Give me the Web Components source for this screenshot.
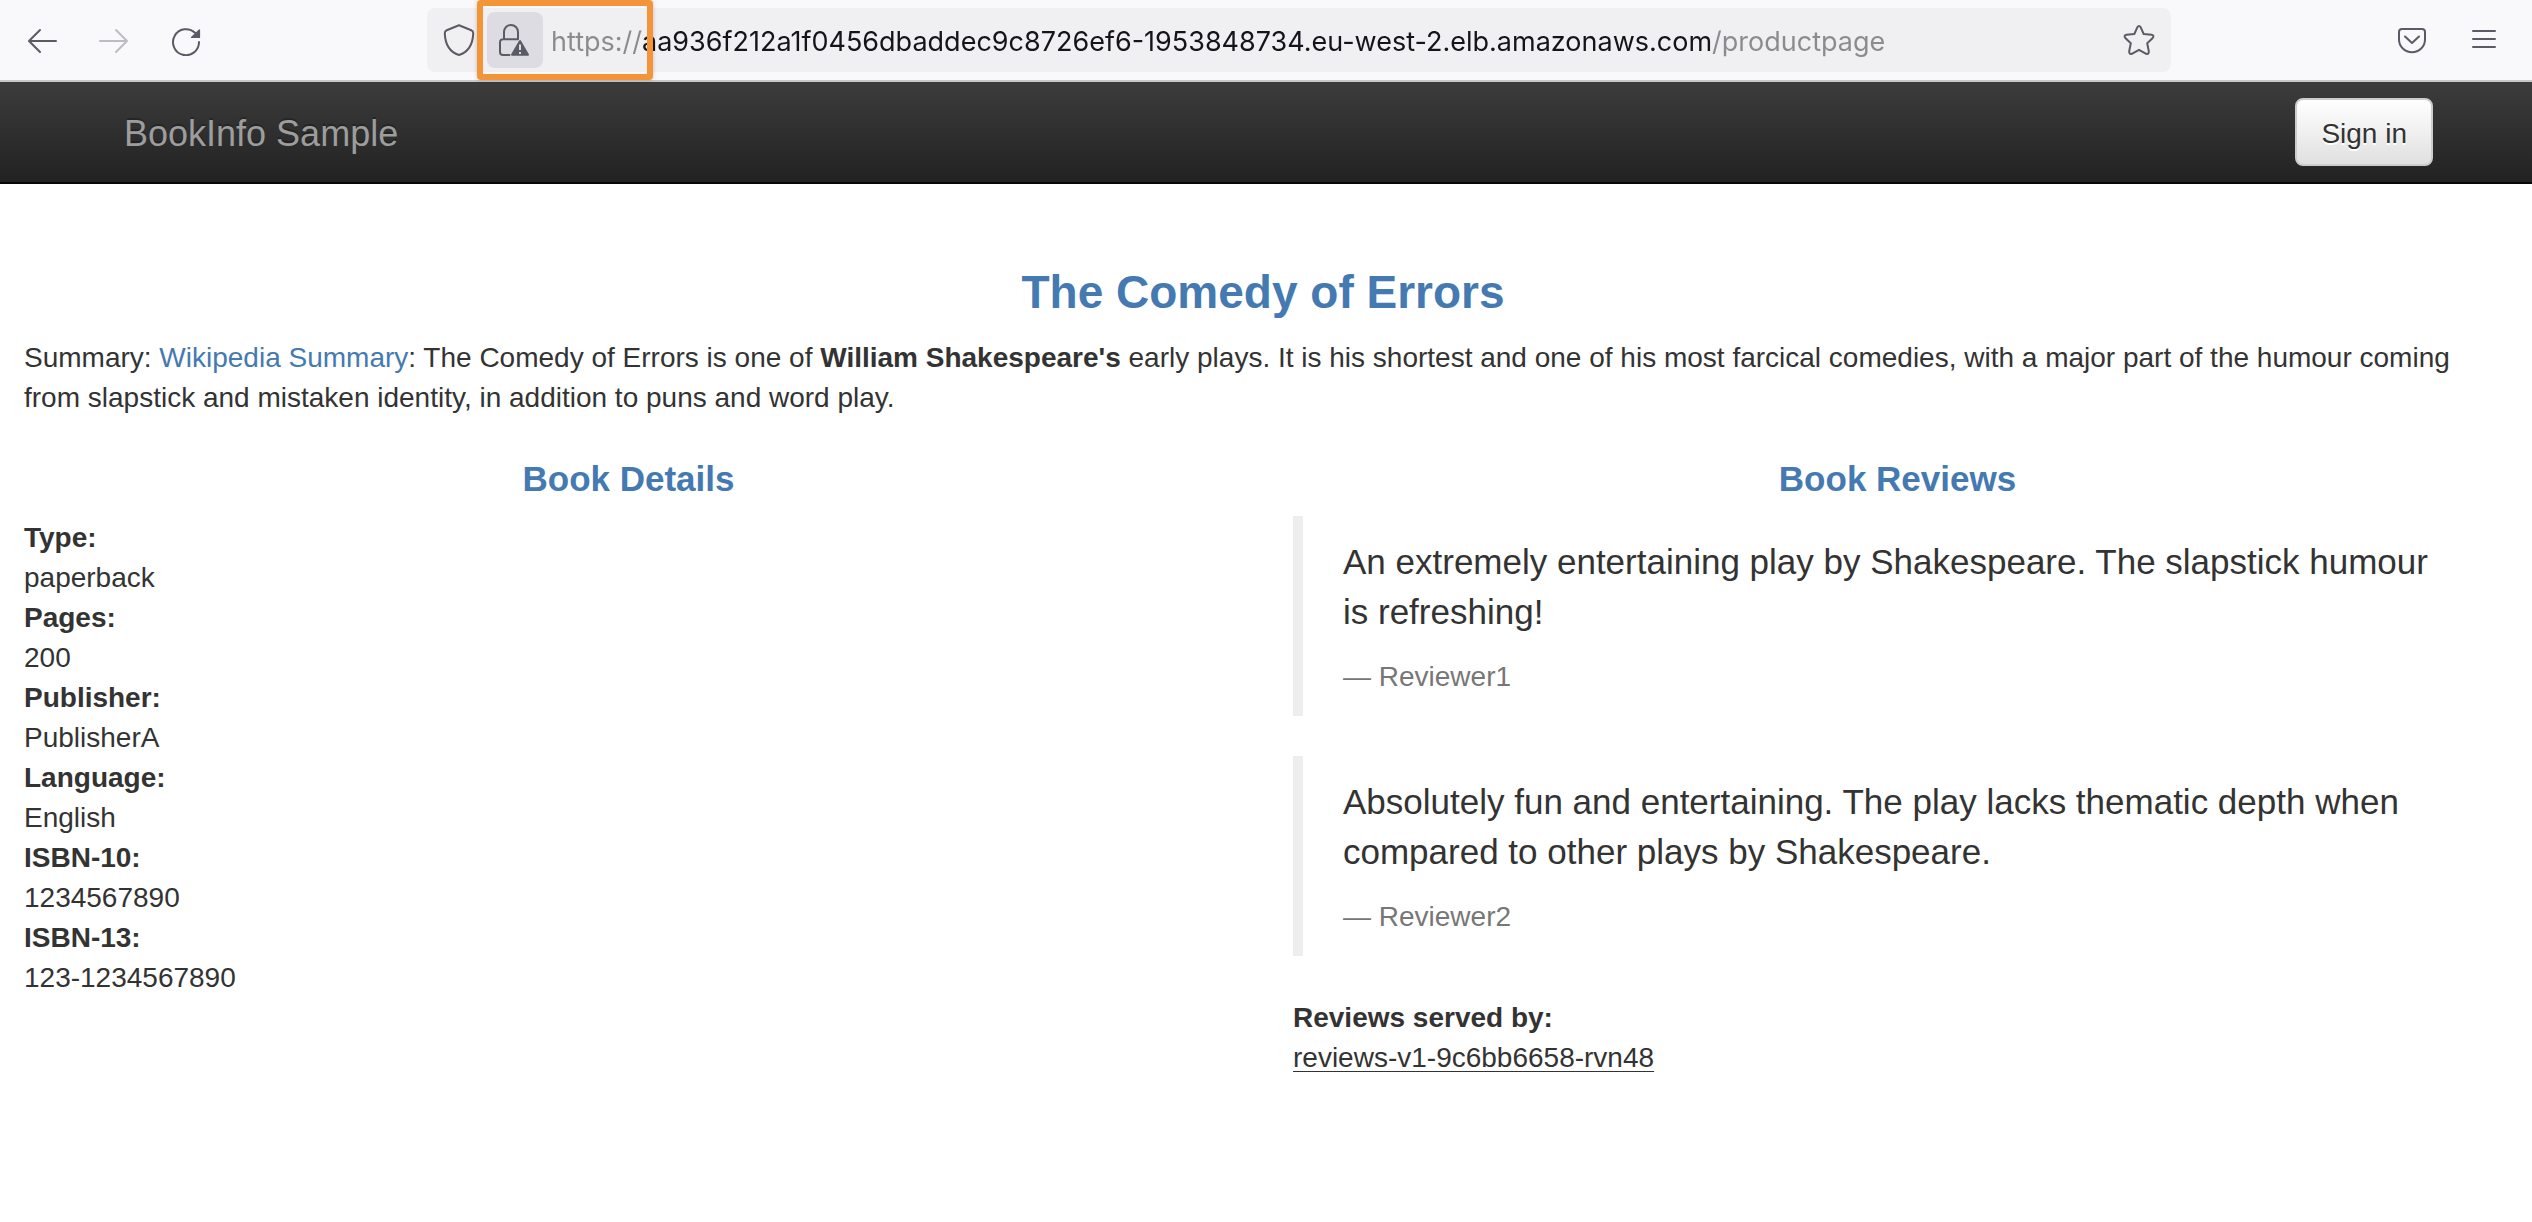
<!DOCTYPE html>
<html lang="en">
<head>
<meta charset="utf-8">
<title>Simple Bookstore App</title>
<style>
  html, body { margin: 0; background: #fff; }
  body { font: 28px/40px "Helvetica Neue", "Liberation Sans", Arial, sans-serif; color: #333; }
</style>
</head>
<body>
<browser-toolbar></browser-toolbar>
<site-navbar brand="BookInfo Sample"></site-navbar>
<product-page></product-page>

<script>
const define = (name, html, setup) => {
  const template = document.createElement('template');
  template.innerHTML = html;
  customElements.define(name, class extends HTMLElement {
    constructor() {
      super();
      this.attachShadow({ mode: 'open' }).append(template.content.cloneNode(true));
    }
    connectedCallback() { if (setup) setup(this, this.shadowRoot); }
  });
};

const icons = {
  back: '<path d="M30 17H3M14 6 3 17l11 11"/>',
  forward: '<path d="M2 17h27M18 6l11 11-11 11"/>',
  reload: '<path d="M29 18A13 13 0 1 1 25 8.8"/><path d="M21.5 13.4H29.4V6Z" fill="currentColor" stroke-width="1.4"/>',
  shield: '<path d="M16 1.2 28.3 6.2Q30.3 7 30.2 9.6C29.8 19.5 26 27.8 16 31 6 27.8 2.2 19.5 1.8 9.6Q1.7 7 3.7 6.2Z"/>',
  lock: '<path d="M5 15.2V8a7 7 0 0 1 14 0V15.2M10.500 31H4a3 3 0 0 1-3-3V18.2a3 3 0 0 1 3-3H19"/><path d="M21 17 13 30.700H29Z" fill="currentColor"/><path d="M21 20.500v5.500M21 28v2" stroke="#dddce2" stroke-linecap="butt"/>',
  star: '<path d="M14.300 3.300Q16 .6 17.700 3.300L20.700 10 28.600 10.800Q31.600 11.500 29.700 14L24.200 19.200 25.800 27.300Q26 30.600 23.200 29.800L16 25.800 8.800 29.800Q6 30.600 6.200 27.300L7.800 19.200 2.300 14Q.4 11.500 3.400 10.800L11.300 10Z"/>',
  pocket: '<path d="M6 5H26a3 3 0 0 1 3 3v7.500a13 12.800 0 0 1-26 0V8a3 3 0 0 1 3-3Z"/><path d="m9 12.500 7 6.500 7-6.500"/>',
  menu: '<path d="M5 7h22M5 15h22M5 23h22"/>'
};

define('tool-icon', `
  <style>
    :host { display: block; width: 32px; height: 32px; }
    svg { display: block; width: 100%; height: 100%; fill: none; stroke: currentColor;
          stroke-width: 2; stroke-linecap: round; stroke-linejoin: round; }
  </style>
  <svg viewBox="0 0 32 32" aria-hidden="true"></svg>`,
  (host, root) => { root.querySelector('svg').innerHTML = icons[host.getAttribute('name')]; });

define('tool-button', `
  <style>
    :host { display: block; flex: none; width: 72px; height: 56px; color: #5b5b66; }
    :host([compact]) { width: 56px; }
    :host([wide]) { width: 64px; }
    button { display: flex; align-items: center; justify-content: center; width: 100%; height: 100%;
             padding: 0; border: 0; border-radius: 8px; background: none; color: inherit; }
    :host([pressed]) button { background: #dddce2; }
    button:disabled { color: #bcbcc2; }
  </style>
  <button type="button"><slot></slot></button>`,
  (host, root) => {
    const button = root.querySelector('button');
    button.setAttribute('aria-label', host.getAttribute('label'));
    button.disabled = host.hasAttribute('disabled');
  });

define('address-bar', `
  <style>
    :host { display: flex; align-items: center; position: relative; box-sizing: border-box; min-width: 0;
            height: 64px; padding-left: 4px; border-radius: 8px; background: #f0f0f3; }
    input { flex: 1; box-sizing: border-box; min-width: 0; height: 56px; margin: 0; padding: 2px 0 0 8px;
            border: 0; outline: 0; font: 27px/40px Inter, sans-serif; color: transparent;
            background: linear-gradient(90deg, #8b8b8e 98px, #15141a 98px 1169px, #8b8b8e 1169px);
            -webkit-background-clip: text; background-clip: text; }
    .highlight { position: absolute; left: 50px; top: -8px; box-sizing: border-box; width: 176px; height: 80px;
                 border: 6px solid #f29437; border-radius: 4px; box-shadow: 0 0 4px #0003; pointer-events: none; }
  </style>
  <tool-button label="Tracking protection" compact><tool-icon name="shield"></tool-icon></tool-button>
  <tool-button label="Site information" compact pressed><tool-icon name="lock"></tool-icon></tool-button>
  <input type="text" aria-label="Address" spellcheck="false"
         value="https://aa936f212a1f0456dbaddec9c8726ef6-1953848734.eu-west-2.elb.amazonaws.com/productpage">
  <tool-button label="Bookmark this page" wide><tool-icon name="star"></tool-icon></tool-button>
  <div class="highlight"></div>`);

define('browser-toolbar', `
  <style>
    :host { display: grid; grid-template-columns: 427fr 1744fr 361fr; align-items: center;
            height: 80px; background: #f9f9fb; border-bottom: 2px solid #c8c8ca; }
    .start, .end { display: flex; align-items: center; }
    .start { padding-left: 6px; }
    .end { justify-content: flex-end; padding-right: 12px; }
  </style>
  <div class="start">
    <tool-button label="Back"><tool-icon name="back"></tool-icon></tool-button>
    <tool-button label="Forward" disabled><tool-icon name="forward"></tool-icon></tool-button>
    <tool-button label="Reload"><tool-icon name="reload"></tool-icon></tool-button>
  </div>
  <address-bar></address-bar>
  <div class="end">
    <tool-button label="Save to Pocket"><tool-icon name="pocket"></tool-icon></tool-button>
    <tool-button label="Menu"><tool-icon name="menu"></tool-icon></tool-button>
  </div>`);

define('site-navbar', `
  <style>
    :host { display: flex; align-items: center; justify-content: space-between; height: 100px;
            padding: 0 99px 0 124px; border-bottom: 2px solid #080808;
            background: linear-gradient(#3c3c3c, #222); }
    a { padding-top: 3px; font-size: 36px; color: #9d9d9d; text-decoration: none; text-shadow: 0 -2px 0 #00000040; }
    button { box-sizing: border-box; height: 68px; padding: 3px 24px 0; border: 2px solid #ccc; border-radius: 8px;
             background: linear-gradient(#fff, #e0e0e0); font: inherit; color: #333;
             text-shadow: 0 2px 0 #fff; }
  </style>
  <a href="#"></a>
  <button type="button">Sign in</button>`,
  (host, root) => { root.querySelector('a').textContent = host.getAttribute('brand'); });

define('section-heading', `
  <style>
    :host { display: block; text-align: center; color: #447ab1; }
    h3, h4 { margin: 0; font-weight: bold; }
    h3 { padding: 20px 0; font-size: 46px; line-height: 52px; }
    h4 { padding: 21px 0 17px; font-size: 35px; line-height: 40px; }
  </style>`,
  (host, root) => {
    const heading = document.createElement(host.getAttribute('level') === '3' ? 'h3' : 'h4');
    heading.append(document.createElement('slot'));
    root.append(heading);
  });

define('detail-item', `
  <style>
    :host { display: block; }
    dl, dd { margin: 0; }
    dt { font-weight: bold; }
  </style>
  <dl><dt></dt><dd><slot></slot></dd></dl>`,
  (host, root) => { root.querySelector('dt').textContent = host.getAttribute('term'); });

define('book-review', `
  <style>
    :host { display: block; margin-bottom: 40px; }
    blockquote { margin: 0; padding: 21px 40px 19px; border-left: 10px solid #eee; font-size: 35px; line-height: 50px; }
    p { margin: 0 0 20px; }
    footer { font-size: 28px; line-height: 40px; color: #777; }
  </style>
  <blockquote>
    <p><slot></slot></p>
    <footer></footer>
  </blockquote>`,
  (host, root) => { root.querySelector('footer').textContent = '\u2014 ' + host.getAttribute('author'); });

define('product-page', `
  <style>
    :host { display: block; padding: 62px 30px 40px 24px; }
    p { margin: 0 0 20px; }
    a { color: #447ab1; text-decoration: none; }
    .columns { display: grid; grid-template-columns: 1fr 1fr; gap: 60px; }
    .details { padding-top: 2px; }
    u { text-decoration-thickness: 1px; text-underline-offset: 4px; text-decoration-skip-ink: none; }
  </style>
  <section-heading level="3">The Comedy of Errors</section-heading>
  <p>Summary: <a href="#">Wikipedia Summary</a>: The Comedy of Errors is one of <b>William Shakespeare's</b> early plays. It is his shortest and one of his most farcical comedies, with a major part of the humour coming from slapstick and mistaken identity, in addition to puns and word play.</p>
  <div class="columns">
    <section>
      <section-heading level="4">Book Details</section-heading>
      <div class="details">
        <detail-item term="Type:">paperback</detail-item>
        <detail-item term="Pages:">200</detail-item>
        <detail-item term="Publisher:">PublisherA</detail-item>
        <detail-item term="Language:">English</detail-item>
        <detail-item term="ISBN-10:">1234567890</detail-item>
        <detail-item term="ISBN-13:">123-1234567890</detail-item>
      </div>
    </section>
    <section>
      <section-heading level="4">Book Reviews</section-heading>
      <book-review author="Reviewer1">An extremely entertaining play by Shakespeare. The slapstick humour is refreshing!</book-review>
      <book-review author="Reviewer2">Absolutely fun and entertaining. The play lacks thematic depth when compared to other plays by Shakespeare.</book-review>
      <div class="details">
        <detail-item term="Reviews served by:"><u>reviews-v1-9c6bb6658-rvn48</u></detail-item>
      </div>
    </section>
  </div>`);
</script>
</body>
</html>
